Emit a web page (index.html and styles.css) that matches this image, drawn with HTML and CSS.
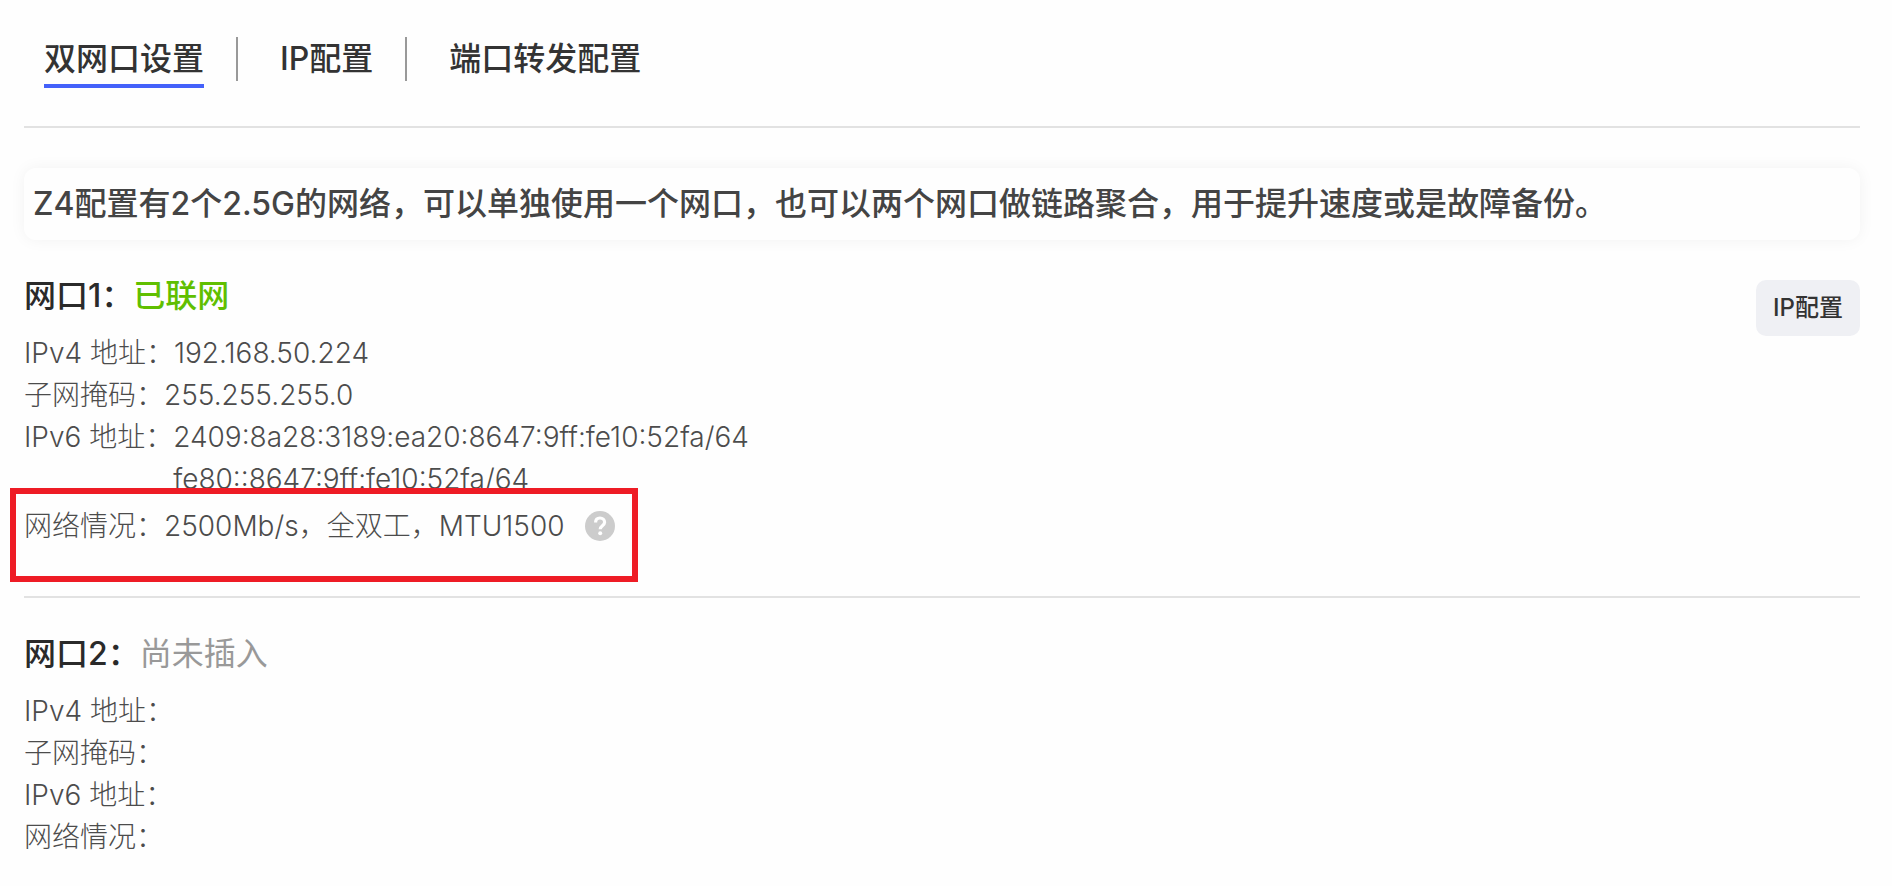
FILE: index.html
```
<!DOCTYPE html>
<html lang="zh-CN">
	<head>
		<meta charset="utf-8">
		<title>双网口设置</title>
		<link rel="stylesheet" href="styles.css">
	</head>
	<body>
		<nav class="tabs">
			<a class="tab active" href="#">双网口设置</a>
			<a class="tab" href="#">IP配置</a>
			<a class="tab" href="#">端口转发配置</a>
		</nav>
		<p class="tips">Z4配置有2个2.5G的网络，可以单独使用一个网口，也可以两个网口做链路聚合，用于提升速度或是故障备份。</p>
		<section class="port">
			<div class="info">
				<h2>网口1：<span class="online">已联网</span></h2>
				<dl>
					<div class="row"><dt>IPv4 地址：</dt><dd>192.168.50.224</dd></div>
					<div class="row"><dt>子网掩码：</dt><dd>255.255.255.0</dd></div>
					<div class="row"><dt>IPv6 地址：</dt><dd>2409:8a28:3189:ea20:8647:9ff:fe10:52fa/64<br>fe80::8647:9ff:fe10:52fa/64</dd></div>
					<div class="row status">
						<dt>网络情况：</dt>
						<dd>2500Mb/s，全双工，MTU1500</dd>
						<button class="help" type="button" aria-label="帮助">
							<svg viewBox="0 0 30 30" width="30" height="30">
								<circle cx="15" cy="15" r="15" fill="#ccc"/>
								<path d="M10.6 11.4C10.6 8.6 12.4 7 15 7s4.6 1.6 4.6 4.2c0 3.4-4.4 3.6-4.4 7" fill="none" stroke="#fff" stroke-width="3.2"/>
								<circle cx="15.2" cy="22.2" r="2" fill="#fff"/>
							</svg>
						</button>
					</div>
				</dl>
			</div>
			<button class="config" type="button">IP配置</button>
		</section>
		<section class="port">
			<div class="info">
				<h2>网口2：<span class="offline">尚未插入</span></h2>
				<dl>
					<div class="row"><dt>IPv4 地址：</dt><dd></dd></div>
					<div class="row"><dt>子网掩码：</dt><dd></dd></div>
					<div class="row"><dt>IPv6 地址：</dt><dd></dd></div>
					<div class="row"><dt>网络情况：</dt><dd></dd></div>
				</dl>
			</div>
		</section>
	</body>
</html>
```
FILE: styles.css
```
*{
	box-sizing: border-box;
	margin: 0;
	padding: 0;
}
body{
	padding: 0 32px 0 24px;
	background: #fefefe;
	font-family: Inter, "Noto Sans CJK SC", sans-serif;
	color: #333;
}
.tabs{
	display: flex;
	align-items: center;
	height: 128px;
	padding: 0 20px 8px;
	border-bottom: 2px solid #e2e2e2;
}
.tab{
	position: relative;
	font-size: 32px;
	font-weight: 500;
	line-height: 44px;
	color: #333;
	text-decoration: none;
}
.tab + .tab{
	margin-left: 32px;
	padding-left: 42px;
	border-left: 2px solid #999;
}
.active::after{
	content: "";
	position: absolute;
	left: 0;
	right: 0;
	bottom: -7px;
	height: 4px;
	background: #4461fa;
}
.tips{
	margin-top: 40px;
	padding: 12px 9px;
	border-radius: 12px;
	box-shadow: 0 0 16px rgba(0, 0, 0, 0.05);
	font-size: 32px;
	font-weight: 500;
	line-height: 48px;
	color: #444;
}
.port{
	display: flex;
	justify-content: space-between;
	align-items: flex-start;
	padding: 32px 0 44px;
}
.port + .port{
	border-top: 2px solid #e2e2e2;
}
h2{
	margin-bottom: 12px;
	font-size: 32px;
	font-weight: 500;
	line-height: 48px;
	color: #2a2a2a;
}
.online{
	color: #60bf00;
}
.offline{
	font-weight: 400;
	color: #999;
}
.row{
	display: flex;
	font-size: 28px;
	font-weight: 300;
	line-height: 42px;
	color: #4c4c4c;
}
.status{
	position: relative;
	align-items: center;
	width: max-content;
	line-height: 52px;
}
/* 红框标注 */
.status::before{
	content: "";
	position: absolute;
	left: -14px;
	right: -23px;
	top: -12px;
	bottom: -30px;
	border: 6px solid #ee1c25;
	pointer-events: none;
}
.help{
	display: flex;
	margin-left: 20px;
	border: none;
	background: none;
}
.config{
	min-width: 104px;
	margin-top: 8px;
	padding: 0 16px;
	border: none;
	border-radius: 10px;
	background: #eff0f4;
	font-family: inherit;
	font-size: 24px;
	font-weight: 500;
	line-height: 56px;
	color: #333;
}
```
